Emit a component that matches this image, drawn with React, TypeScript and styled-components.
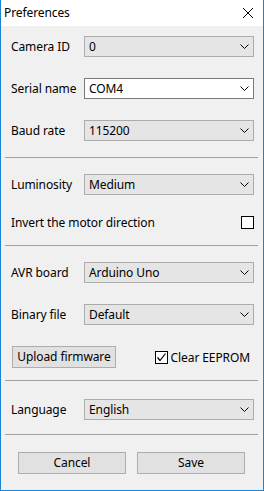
import React from "react";
import styled, { createGlobalStyle } from "styled-components";

const Global = createGlobalStyle`
  html, body { margin: 0; padding: 0; background: #ffffff; }
  body { font-family: "Segoe UI", "Noto Sans", "Liberation Sans", sans-serif; font-size: 12px; color: #000; letter-spacing: -0.1px; }
  * { box-sizing: border-box; }
`;

const Window = styled.div`
  width: 264px;
  height: 491px;
  display: flex;
  flex-direction: column;
  border: 1px solid #1883d7;
  border-top: none;
  background: #f0f0f0;
`;

const TitleBar = styled.div`
  height: 26px;
  flex: none;
  background: #ffffff;
  display: flex;
  align-items: center;
  justify-content: space-between;
  padding: 0 9px 0 3px;
`;

const Title = styled.span`
  font-size: 12px;
  line-height: 16px;
`;

const CloseIcon = styled.svg`
  width: 12px;
  height: 12px;
  display: block;
`;

const Section = styled.div<{ $top: number; $bottom: number; $gap?: number }>`
  display: flex;
  flex-direction: column;
  gap: ${(p) => p.$gap ?? 21}px;
  padding: ${(p) => p.$top}px 9px ${(p) => p.$bottom}px 10px;
`;

const Separator = styled.div`
  height: 1px;
  margin: 0 5px 0 4px;
  background: #a0a0a0;
  flex: none;
`;

const Row = styled.div<{ $h?: number; $indent?: number }>`
  display: flex;
  align-items: center;
  justify-content: space-between;
  height: ${(p) => p.$h ?? 21}px;
  padding-left: ${(p) => p.$indent ?? 0}px;
`;

const Label = styled.span`
  width: 72px;
  white-space: nowrap;
  line-height: 16px;
`;

const Combo = styled.div<{ $editable?: boolean }>`
  width: 170px;
  height: 21px;
  display: flex;
  align-items: center;
  justify-content: space-between;
  padding: 0 4px 0 4px;
  background: ${(p) => (p.$editable ? "#ffffff" : "#e5e5e5")};
  border: 1px solid ${(p) => (p.$editable ? "#7a7a7a" : "#acacac")};
`;

const ComboText = styled.span`
  line-height: 16px;
`;

const ChevronSvg = styled.svg`
  display: block;
  width: 9px;
  height: 5px;
`;

const Chevron = () => (
  <ChevronSvg viewBox="0 0 9 5">
    <path d="M0.5 0.5 L4.5 4.5 L8.5 0.5" fill="none" stroke="#000" strokeWidth="1" />
  </ChevronSvg>
);

const CheckBox = styled.span`
  width: 13px;
  height: 13px;
  border: 1px solid #000;
  background: #fff;
  display: flex;
  align-items: center;
  justify-content: center;
  flex: none;
`;

const Button = styled.div<{ $w: number }>`
  width: ${(p) => p.$w}px;
  height: 22px;
  display: flex;
  align-items: center;
  justify-content: center;
  background: #e1e1e1;
  border: 1px solid #adadad;
  line-height: 16px;
`;

const CheckLabel = styled.label`
  display: flex;
  align-items: center;
  gap: 3px;
  margin-right: 4px;
`;

const Footer = styled.div`
  display: flex;
  justify-content: space-between;
  padding: 17px 18px 0 17px;
`;

const ComboRow = ({ label, value, editable }: { label: string; value: string; editable?: boolean }) => (
  <Row>
    <Label>{label}</Label>
    <Combo $editable={editable}>
      <ComboText>{value}</ComboText>
      <Chevron />
    </Combo>
  </Row>
);

export default function App() {
  return (
    <>
      <Global />
      <Window>
        <TitleBar>
          <Title>Preferences</Title>
          <CloseIcon viewBox="0 0 12 12">
            <path d="M1 1 L11 11 M11 1 L1 11" stroke="#000" strokeWidth="1" fill="none" />
          </CloseIcon>
        </TitleBar>
        <Section $top={10} $bottom={16}>
          <ComboRow label="Camera ID" value="0" />
          <ComboRow label="Serial name" value="COM4" editable />
          <ComboRow label="Baud rate" value="115200" />
        </Section>
        <Separator />
        <Section $top={16} $bottom={12} $gap={17}>
          <ComboRow label="Luminosity" value="Medium" />
          <Row>
            <span>Invert the motor direction</span>
            <CheckBox />
          </Row>
        </Section>
        <Separator />
        <Section $top={16} $bottom={12}>
          <ComboRow label="AVR board" value="Arduino Uno" />
          <ComboRow label="Binary file" value="Default" />
          <Row $h={22} $indent={1}>
            <Button $w={104}>Upload firmware</Button>
            <CheckLabel>
              <CheckBox>
                <svg width="11" height="11" viewBox="0 0 11 11">
                  <path d="M1.5 5.5 L4 8.5 L9.5 1.5" fill="none" stroke="#000" strokeWidth="1.2" />
                </svg>
              </CheckBox>
              <span>Clear EEPROM</span>
            </CheckLabel>
          </Row>
        </Section>
        <Separator />
        <Section $top={18} $bottom={14}>
          <ComboRow label="Language" value="English" />
        </Section>
        <Separator />
        <Footer>
          <Button $w={108}>Cancel</Button>
          <Button $w={108}>Save</Button>
        </Footer>
      </Window>
    </>
  );
}
